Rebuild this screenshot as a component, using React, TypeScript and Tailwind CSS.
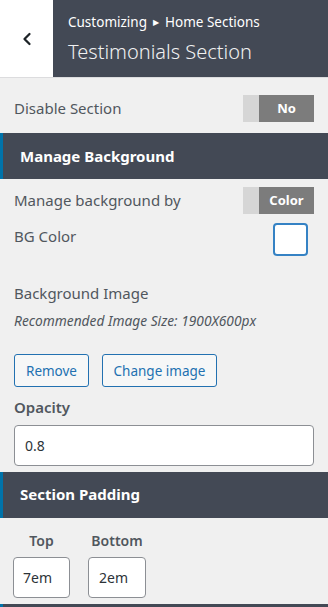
import { ChevronLeft } from 'lucide-react';

const font = { fontFamily: '"Noto Sans", "Open Sans", sans-serif' };

const Toggle = ({ label }: { label: string }) => (
	<div className="flex h-[27px] w-[71px]">
		<div className="w-4 bg-[#d6d6d6]" />
		<div className="flex flex-1 items-center justify-center bg-[#7c7c7c] text-[13px] font-bold text-white">
			{label}
		</div>
	</div>
);

const SectionHeader = ({ title }: { title: string }) => (
	<div className="flex h-[46px] items-center border-l-[3px] border-[#0073aa] bg-[#434955] pl-[17px] text-[15px] font-bold text-white">
		{title}
	</div>
);

const App = () => {
	return (
		<div
			className="h-[607px] w-[328px] overflow-hidden bg-[#f0f0f0] text-[#50575e]"
			style={font}
		>
			{/* header */}
			<div className="flex h-[78px] border-b border-[#dcdcde]">
				<div className="flex w-[53px] items-center justify-center bg-white text-[#1d2327]">
					<ChevronLeft size={20} strokeWidth={2.75} />
				</div>
				<div className="flex flex-1 flex-col justify-center bg-[#434955] pl-[15px] text-white">
					<div className="flex items-center gap-[6px] text-[13.5px] leading-[18px]">
						<span>Customizing</span>
						<span className="text-[8px]">▶</span>
						<span>Home Sections</span>
					</div>
					<div className="mt-[9px] text-[20px] font-light leading-[24px] text-[#f0f0f1]">
						Testimonials Section
					</div>
				</div>
			</div>

			<div className="flex h-[55px] items-center justify-between px-[14px] pt-[6px]">
				<span className="text-[15px]">Disable Section</span>
				<Toggle label="No" />
			</div>

			<SectionHeader title="Manage Background" />

			<div className="flex items-center justify-between px-[14px] pt-[8px]">
				<span className="text-[15px]">Manage background by</span>
				<Toggle label="Color" />
			</div>

			<div className="flex items-start justify-between pl-[14px] pr-[20px] pt-[9px]">
				<span className="mt-[2px] text-[15px]">BG Color</span>
				<div className="h-[33px] w-[35px] rounded-[4px] border-2 border-[#3582c4] bg-white" />
			</div>

			<div className="px-[14px] pt-[26px]">
				<div className="text-[15px]">Background Image</div>
				<div className="mt-[6px] text-[13.75px] italic">
					Recommended Image Size: 1900X600px
				</div>
				<div className="mt-[23px] flex gap-[13px]">
					<button className="h-[33px] w-[75px] rounded-[3px] border border-[#2271b1] bg-[#f6f7f7] text-[13.5px] text-[#2271b1]">
						Remove
					</button>
					<button className="h-[33px] w-[115px] rounded-[3px] border border-[#2271b1] bg-[#f6f7f7] text-[13.5px] text-[#2271b1]">
						Change image
					</button>
				</div>
				<div className="mt-[9px] text-[15px] font-semibold">Opacity</div>
				<div className="mt-[6px] flex h-[41px] items-center rounded-[4px] border border-[#8c8f94] bg-white px-[10px] text-[14px] text-[#2c3338]">
					0.8
				</div>
			</div>

			<div className="mt-[6px]">
				<SectionHeader title="Section Padding" />
			</div>

			<div className="flex gap-[18px] px-[13px] pt-[12px]">
				<div className="flex w-[57px] flex-col items-center">
					<span className="text-[14px] font-semibold">Top</span>
					<div className="mt-[6px] flex h-[41px] w-[57px] items-center rounded-[4px] border border-[#8c8f94] bg-white px-[9px] text-[14px] text-[#2c3338]">
						7em
					</div>
				</div>
				<div className="flex w-[58px] flex-col items-center">
					<span className="text-[14px] font-semibold">Bottom</span>
					<div className="mt-[6px] flex h-[41px] w-[58px] items-center rounded-[4px] border border-[#8c8f94] bg-white px-[10px] text-[14px] text-[#2c3338]">
						2em
					</div>
				</div>
			</div>

			<div className="mt-[6px] h-[3px] border-l-[3px] border-[#0073aa] bg-[#434955]" />
		</div>
	);
};

export default App;
